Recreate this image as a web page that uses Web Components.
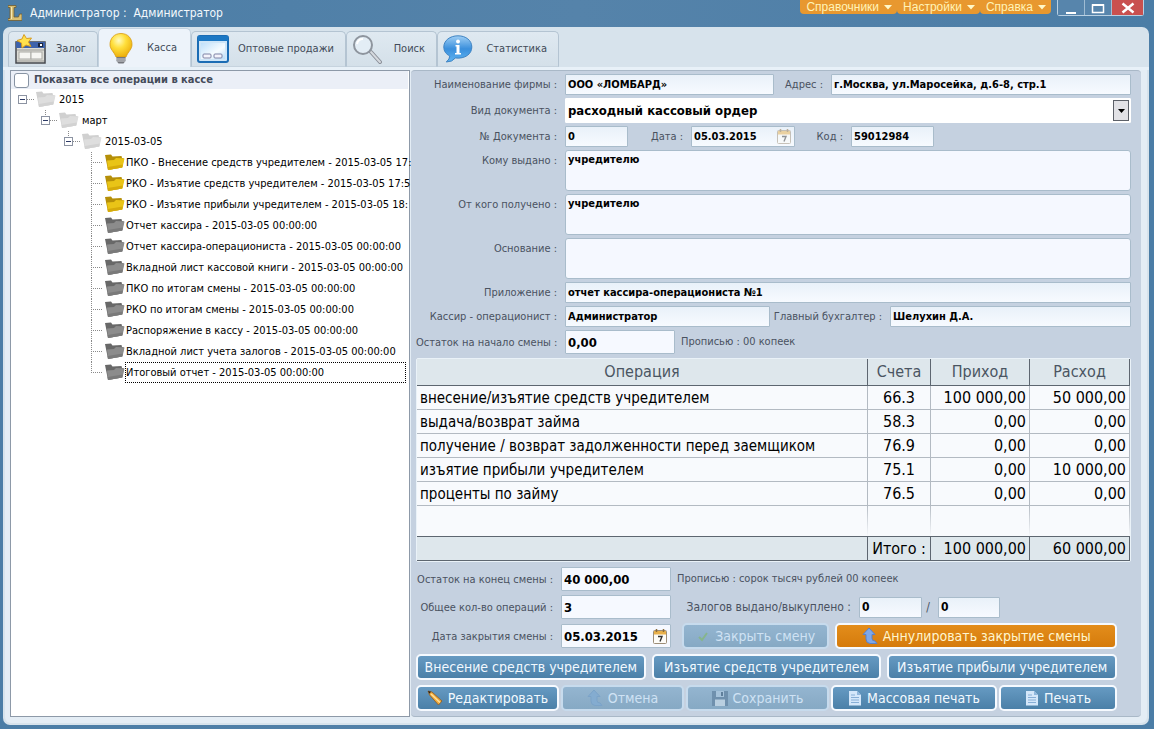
<!DOCTYPE html>
<html lang="ru">
<head>
<meta charset="utf-8">
<title>Администратор</title>
<style>
  html, body { margin: 0; background: #4f7fa8; }
  body { font: 11px/14px "DejaVu Sans Condensed", "DejaVu Sans", "Noto Sans", sans-serif; color: #4a5260; }
</style>
</head>
<body>
<cash-app></cash-app>

<script>
const define = (name, html, setup) => {
  const tpl = document.createElement('template');
  tpl.innerHTML = html;
  customElements.define(name, class extends HTMLElement {
    connectedCallback() {
      if (this.shadowRoot) return;
      const root = this.attachShadow({ mode: 'open' });
      root.append(tpl.content.cloneNode(true));
      if (setup) setup(this, root);
    }
  });
};

/* ---------- icons ---------- */
const folder = (a, b, c) => `<svg viewBox="0 0 20 17" width="20" height="17">
  <path d="M0 1l6-.5 1.500 2 9-.5.5 2 2 .5-2 9L3 16z" fill="${a}"/>
  <path d="M2 6.500l7-.5 2-2 8.500.5-2 9L3 16z" fill="${b}"/>
  <path d="M2.600 13l15.200-2.500-.6 3L3 16z" fill="${c}"/></svg>`;
const calendar = `<svg viewBox="0 0 14 16" width="14" height="16">
  <rect x="0.500" y="2.500" width="13" height="13" rx="1" fill="#fdfcf8" stroke="#9c8d77"/>
  <path d="M1 3h12v3.500H1z" fill="#e8b04a"/>
  <path d="M3.500 1v3M10.500 1v3" stroke="#8a6b3a" stroke-width="1.500"/>
  <path d="M5 8.500h4l-2 5" fill="none" stroke="#333" stroke-width="1.400"/></svg>`;
const page = `<svg viewBox="0 0 14 16" width="14" height="16">
  <path d="M1 1h8l4 4v10.500H1z" fill="#d4e7fa"/><path d="M9 1l4 4H9z" fill="#8fb7dd"/>
  <path d="M3 5h4M3 7.500h8M3 10h8M3 12.500h8" stroke="#86aed6"/></svg>`;
const arrow = (a, b) => `<svg viewBox="0 0 16 16" width="16" height="16">
  <path d="M7 0L1 6.500h3V11q0 4 4 4.500h7l-2-2.500q-3 0-3-2.500v-4h3z" fill="${a}" stroke="${b}"/></svg>`;
const ICONS = {
  logo: `<svg viewBox="0 0 14 16" width="14" height="16">
    <path d="M0 .5h8v2H6V12h4.500l1-3H14v6.500H0v-2h2V2.500H0z" fill="#d9bf72" stroke="#6d5c33" stroke-width=".8"/>
    <path d="M3.500 2v12" stroke="#f6e8b4"/></svg>`,
  pledge: `<svg viewBox="0 0 33 30" width="33" height="30">
    <rect x="2" y="8" width="29" height="21" fill="#dcdcd6" stroke="#45484e" stroke-width="1.500"/>
    <path d="M2 8h29v6H2z" fill="#3d62ab"/><path d="M24 9h5v4h-5z" fill="#1b2741"/><path d="M26 10h2v2h-2z" fill="#fff"/>
    <path d="M3 16h27M3 27h27" stroke="#9a9a96"/>
    <rect x="5" y="18" width="12" height="7" fill="#f6f6f2" stroke="#a9a9a4"/>
    <rect x="17" y="18" width="11" height="7" fill="#f6f6f2" stroke="#a9a9a4"/>
    <path d="M10 .5l2.500 4 5-.5-3 4 2.500 4.500-5-1.500-4 3-.5-5L3 6.500l5-1.500z" fill="#ffe14d" stroke="#d79b21"/></svg>`,
  bulb: `<svg viewBox="0 0 24 31" width="24" height="31">
    <defs><radialGradient id="g" cx=".4" cy=".3" r=".8"><stop offset="0" stop-color="#fffbc0"/><stop offset=".4" stop-color="#ffdf3c"/><stop offset="1" stop-color="#e8a400"/></radialGradient></defs>
    <path d="M12 .5C5 .5 1 5.500 1 11.500c0 5 4 7 6 12.500h10c2-5.500 6-7.500 6-12.500C23 5.500 19 .5 12 .5z" fill="url(#g)" stroke="#d89b12" stroke-width=".8"/>
    <path d="M7.500 24h9v4l-2 2.500h-5l-2-2.500z" fill="#75777c"/><path d="M7.500 26h9M8 28h8" stroke="#cfd1d5"/></svg>`,
  sales: `<svg viewBox="0 0 32 28" width="32" height="28">
    <defs><linearGradient id="g" x2="1" y2="1"><stop offset="0" stop-color="#bfe0fb"/><stop offset=".6" stop-color="#f7fcff"/><stop offset="1" stop-color="#b9dcf7"/></linearGradient></defs>
    <rect x="1" y="1" width="30" height="26" rx="2" fill="#cfe6f8" stroke="#1b6cb4" stroke-width="2"/>
    <path d="M1 1h30v5H1z" fill="#1c78c4"/><rect x="4" y="8" width="24" height="16" fill="url(#g)"/>
    <rect x="6" y="19" width="8" height="4" rx="1" fill="#f4f3fb" stroke="#7c82a5"/>
    <rect x="17" y="19" width="8" height="4" rx="1" fill="#f4f3fb" stroke="#7c82a5"/></svg>`,
  search: `<svg viewBox="0 0 30 30" width="30" height="30">
    <path d="M19 18l9 10" stroke="#8b9099" stroke-width="4" stroke-linecap="round"/><path d="M19 18l9 10" stroke="#d5d9de" stroke-width="2" stroke-linecap="round"/>
    <circle cx="11" cy="11" r="9" fill="#e3edf5" stroke="#8e959e" stroke-width="2"/><path d="M5 10q1-5 6-5" stroke="#fff" stroke-width="2" fill="none"/></svg>`,
  info: `<svg viewBox="0 0 30 28" width="30" height="28">
    <defs><linearGradient id="g" x2="0" y2="1"><stop offset="0" stop-color="#9fcff5"/><stop offset=".5" stop-color="#3a8fdc"/><stop offset="1" stop-color="#5fb5f2"/></linearGradient></defs>
    <path d="M15 .8C7 .8.8 5.500.8 12c0 4 2 7 6 9q0 3-3.500 6 6 0 9-4c10 1 16.500-4 16.500-11C28.800 5.500 23 .8 15 .8z" fill="url(#g)" stroke="#3f83c2"/>
    <circle cx="15" cy="6.500" r="1.900" fill="#fff"/><path d="M12.500 10h4v8h1.500v1.500h-6V18h1.500v-6.500h-1z" fill="#fff"/></svg>`,
  folder0: folder('#d0d0d0', '#dedede', '#d2d2d2'),
  folder1: folder('#b58f08', '#e9c417', '#d6ab0a'),
  folder2: folder('#686868', '#8c8c8c', '#7a7a7a'),
  calendar,
  caret: `<svg viewBox="0 0 8 5" width="8" height="5"><path d="M0 0h8L4 4.500z" fill="#fff8c8"/></svg>`,
  down: `<svg viewBox="0 0 7 4" width="7" height="4"><path d="M0 0h7L3.500 4z" fill="#000"/></svg>`,
  min: `<svg viewBox="0 0 12 14" width="12" height="14"><path d="M1 12h10" stroke="#fff" stroke-width="2"/></svg>`,
  max: `<svg viewBox="0 0 14 12" width="14" height="12"><path d="M1.500 3h11v7.500h-11z" fill="none" stroke="#fff" stroke-width="1.500"/><path d="M1 2h12v2H1z" fill="#fff"/></svg>`,
  close: `<svg viewBox="0 0 14 12" width="14" height="12"><path d="M1.500 1.500l11 9M12.500 1.500l-11 9" stroke="#fff" stroke-width="2.500"/></svg>`,
  pencil: `<svg viewBox="0 0 16 16" width="16" height="16"><path d="M1 1l4 1 10 9-3.500 4L2.500 5z" fill="#eda93c" stroke="#8a5a26" stroke-width=".8"/><path d="M4 4l9 8.500" stroke="#ffe09a" stroke-width="1.500"/><path d="M1 1l3 .8-1.500 2z" fill="#222"/></svg>`,
  check: `<svg viewBox="0 0 14 12" width="14" height="12"><path d="M3 7l3 3 5-7" fill="none" stroke="#86b58c" stroke-width="2"/></svg>`,
  up: arrow('#7fa8e8', '#5b80c6'),
  upoff: arrow('#84acd0', '#7ba3c8'),
  disk: `<svg viewBox="0 0 16 16" width="16" height="16"><path d="M0 1h16v15H0z" fill="#6f90ad"/><path d="M4 1h8v6H4z" fill="#a5c2da"/><path d="M3 9.500h10V16H3z" fill="#b9cfe0"/><path d="M9 2h2v4H9z" fill="#5f7f9b"/></svg>`,
  page
};
define('ui-icon', `<style>:host{display:inline-flex;flex:none}svg{display:block}</style>`,
  (el, root) => root.querySelector('style').insertAdjacentHTML('afterend', ICONS[el.getAttribute('name')] || ''));

/* ---------- buttons ---------- */
define('action-button', `<style>
  :host { display: block; min-width: 0; --top: #669ac2; --low: #4b80a8; }
  :host([tone=orange]) { --top: #e38d1b; --low: #d57b0c; }
  button { box-sizing: border-box; width: 100%; height: 26px; margin: 0; padding: 0; display: flex; align-items: center; justify-content: center; gap: 5px;
    border: 2px solid #f6faff; border-radius: 5px; background: linear-gradient(var(--top), var(--low)); color: #f2f9ff;
    font: inherit; font-size: 14px; line-height: 20px; white-space: nowrap; }
  :host([tone=orange]) button { color: #fff6cf; }
  button:disabled { background: linear-gradient(#94b5d0, #86a9c4); border-color: #c7dbed; color: #cfe2f4; }
</style><button type="button"><span><slot></slot></span></button>`, (el, root) => {
  const button = root.querySelector('button');
  if (el.hasAttribute('icon')) button.insertAdjacentHTML('afterbegin', `<ui-icon name="${el.getAttribute('icon')}"></ui-icon>`);
  button.disabled = el.hasAttribute('disabled');
});

/* ---------- form fields ---------- */
define('form-field', `<style>
  :host { display: flex; align-items: stretch; min-width: 0; }
  label { flex: none; box-sizing: border-box; width: var(--label, 149px); padding-right: 8px; text-align: right; white-space: nowrap; line-height: 21px; align-self: center; }
  :host([type=area]) label { align-self: flex-start; }
  .box { position: relative; display: flex; flex: 1; min-width: 0; }
  input, textarea, select { box-sizing: border-box; width: 100%; min-width: 0; margin: 0; padding: 0 2px; border: 1px solid #a9bccb; border-radius: 1px;
    background: linear-gradient(#e9f1f9, #f7faff); color: #000; font: inherit; font-weight: bold; outline: 0; }
  input { height: 21px; }
  :host([big]) input { height: 24px; font-size: 13px; background: #f6f9ff; }
  textarea { height: 41px; padding: 2px; border-radius: 3px; resize: none; background: #f5f8ff; display: block; }
  select { height: 25px; appearance: none; border-color: #fff; background: #fff; font-size: 13px; }
  .arrow { position: absolute; right: 2px; top: 2px; bottom: 2px; width: 16px; box-sizing: border-box; border: 1px solid #5c6068; background: #e2e2e6; display: flex; align-items: center; justify-content: center; pointer-events: none; }
  .cal { position: absolute; right: 4px; top: 2px; padding: 0; border: 0; background: none; display: flex; }
  :host([big]) .cal { top: 4px; }
  :host([muted]) .cal { opacity: .5; }
</style><label for="f"></label><span class="box"></span>`, (el, root) => {
  const label = root.querySelector('label'), box = root.querySelector('.box');
  const value = el.getAttribute('value') || '', type = el.getAttribute('type');
  label.textContent = el.getAttribute('label');
  if (type === 'area') box.innerHTML = `<textarea id="f">${value}</textarea>`;
  else if (type === 'select') box.innerHTML = `<select id="f"><option>${value}</option></select><span class="arrow"><ui-icon name="down"></ui-icon></span>`;
  else box.innerHTML = `<input id="f" value="${value}">` + (type === 'date' ? `<button class="cal" type="button" aria-label="Календарь"><ui-icon name="calendar"></ui-icon></button>` : '');
});

/* ---------- tree ---------- */
define('tree-item', `<style>
  :host { display: block; }
  .row { display: flex; align-items: center; height: 21px; color: #000; }
  .toggle { padding: 0; border: 0; background: none; display: flex; flex: none; }
  .branch, .ic { flex: none; display: flex; }
  svg { display: block; }
  .text { flex: 1; min-width: 0; white-space: nowrap; line-height: 19px; padding: 1px; }
  :host([kind="0"]) .text { padding-left: 3px; }
  :host([selected]) .text { border: 1px dotted #000; padding: 0; }
  .kids { padding-left: 23px; }
</style><div class="row"><span class="branch"></span><span class="ic"></span><span class="text"></span></div><div class="kids"><slot></slot></div>`, (el, root) => {
  const dot = 'stroke="#8a8a8a" stroke-dasharray="1 1"';
  const kids = el.children.length, top = el.hasAttribute('root'), last = !el.nextElementSibling;
  const art = kids
    ? `${top ? '' : `<path d="M8.500 0v6" ${dot}/>`}<path d="M13 10.500h8" ${dot}/><rect x="4.500" y="6.500" width="8" height="8" fill="#fff" stroke="#8c93a2"/><path d="M6 10.500h5" stroke="#2d3a66"/>`
    : `<path d="M8.500 0v${last ? 11 : 21}M8 10.500h12" ${dot}/>`;
  const svg = `<svg width="22" height="21" viewBox="0 0 22 21" shape-rendering="crispEdges" fill="none">${art}</svg>`;
  root.querySelector('.branch').innerHTML = kids ? `<button class="toggle" type="button" aria-label="Свернуть">${svg}</button>` : svg;
  root.querySelector('.ic').innerHTML = `<ui-icon name="folder${el.getAttribute('kind')}"></ui-icon>`;
  root.querySelector('.text').textContent = el.getAttribute('text');
});
const LEAVES = [
  [1, 'ПКО - Внесение средств учредителем - 2015-03-05 17:'], [1, 'РКО - Изъятие средств учредителем - 2015-03-05 17:5'],
  [1, 'РКО - Изъятие прибыли учредителем - 2015-03-05 18:'], [2, 'Отчет кассира - 2015-03-05 00:00:00'],
  [2, 'Отчет кассира-операциониста - 2015-03-05 00:00:00'], [2, 'Вкладной лист кассовой книги - 2015-03-05 00:00:00'],
  [2, 'ПКО по итогам смены - 2015-03-05 00:00:00'], [2, 'РКО по итогам смены - 2015-03-05 00:00:00'],
  [2, 'Распоряжение в кассу - 2015-03-05 00:00:00'], [2, 'Вкладной лист учета залогов - 2015-03-05 00:00:00'],
  [2, 'Итоговый отчет - 2015-03-05 00:00:00']
];
define('operation-tree', `<style>
  :host { display: block; box-sizing: border-box; border: 1px solid #8d99a8; background: #fff; min-width: 0; }
  .head { display: flex; align-items: center; gap: 5px; height: 18px; margin-right: 1px; padding-left: 3px; background: #ebeff7; }
  input { appearance: none; flex: none; box-sizing: border-box; width: 15px; height: 15px; margin: 0; border: 1px solid #8793a3; border-radius: 3px; background: #fff; }
  label { font-weight: bold; white-space: nowrap; color: #434b5a; }
  .list { padding: 0 3px; }
</style><div class="head"><input type="checkbox" id="all"><label for="all">Показать все операции в кассе</label></div>
<div class="list"><tree-item root kind="0" text="2015"><tree-item kind="0" text="март"><tree-item kind="0" text="2015-03-05">${
  LEAVES.map(([k, t], i) => `<tree-item kind="${k}" text="${t}"${i === 10 ? ' selected' : ''}></tree-item>`).join('')
}</tree-item></tree-item></tree-item></div>`);

/* ---------- operations table ---------- */
const ROWS = [
  ['внесение/изъятие средств учредителем', '66.3', '100 000,00', '50 000,00'],
  ['выдача/возврат займа', '58.3', '0,00', '0,00'],
  ['получение / возврат задолженности перед заемщиком', '76.9', '0,00', '0,00'],
  ['изъятие прибыли учредителем', '75.1', '0,00', '10 000,00'],
  ['проценты по займу', '76.5', '0,00', '0,00']
];
define('operation-table', `<style>
  :host { display: block; border: 1px solid #eaf2f8; border-radius: 2px; background: #f8fafd; }
  table { width: 100%; table-layout: fixed; border-collapse: separate; border-spacing: 0; font-size: 16px; line-height: 20px; color: #000; }
  th, td { box-sizing: border-box; height: 24px; padding: 0 3px; white-space: nowrap; font-weight: normal; border: 0 solid #b3bac2; border-width: 0 1px 1px 0; text-align: right; }
  th { height: 27px; background: #dee7ec; color: #4a5562; text-align: center; border-color: #5d6670; }
  td:first-child { text-align: left; font-size: 15px; }
  td:nth-child(2) { text-align: center; }
  .blank td { height: 30px; border-right: 1px solid; border-image: linear-gradient(#b3bac2, #f8fafd) 1; border-bottom: 0; }
  tfoot td { height: 25px; background: #dee7ec; border-color: #5d6670; border-top-width: 1px; }
</style>
<table><colgroup><col><col style="width:63px"><col style="width:99px"><col style="width:100px"></colgroup>
<thead><tr><th>Операция</th><th>Счета</th><th>Приход</th><th>Расход</th></tr></thead>
<tbody>${ROWS.map(r => `<tr>${r.map(c => `<td>${c}</td>`).join('')}</tr>`).join('')}<tr class="blank"><td></td><td></td><td></td><td></td></tr></tbody>
<tfoot><tr><td></td><td>Итого :</td><td>100 000,00</td><td>60 000,00</td></tr></tfoot></table>`);

/* ---------- document form ---------- */
define('cash-document', `<style>
  :host { display: block; box-sizing: border-box; min-width: 0; padding: 3px 10px 3px 5px; border: 1px solid #a9b8c7; border-width: 1px 0; border-radius: 4px; background: #c5d1e0; }
  .fields, .totals { display: flex; flex-direction: column; gap: 3px; }
  .totals { gap: 4px; margin-right: 14px; --label: 145px; }
  .row { display: flex; align-items: center; }
  operation-table { margin: 4px 0 5px; }
  .grow { flex: 1; }
  .firm { width: 358px; } .addr { --label: 57px; }
  .num { width: 212px; } .date { width: 167px; --label: 63px; } .code { width: 139px; --label: 56px; }
  .cashier { width: 354px; } .chief { --label: 120px; }
  .start { width: 259px; } .end { width: 255px; }
  .note { padding-left: 6px; white-space: nowrap; }
  .issued { width: 251px; font-size: 12px; --label: 188px; } .redeemed { width: 78px; font-size: 12px; --label: 16px; }
  .actions { gap: 6px; height: 26px; margin-top: 1px; }
  .w1 { flex: 147; } .w2 { flex: 281; }
  .close { display: flex; gap: 6px; flex: 1; padding-left: 11px; }
  .three action-button { flex: 1; }
  .five { gap: 2px; }
</style>
<div class="fields">
  <div class="row"><form-field class="firm" label="Наименование фирмы :" value="ООО «ЛОМБАРД»"></form-field><form-field class="addr grow" label="Адрес :" value="г.Москва, ул.Маросейка, д.6-8, стр.1"></form-field></div>
  <form-field type="select" label="Вид документа :" value="расходный кассовый ордер"></form-field>
  <div class="row"><form-field class="num" label="№ Документа :" value="0"></form-field><form-field class="date" type="date" muted label="Дата :" value="05.03.2015"></form-field><form-field class="code" label="Код :" value="59012984"></form-field></div>
  <form-field type="area" label="Кому выдано :" value="учредителю"></form-field>
  <form-field type="area" label="От кого получено :" value="учредителю"></form-field>
  <form-field type="area" label="Основание :"></form-field>
  <form-field label="Приложение :" value="отчет кассира-операциониста №1"></form-field>
  <div class="row"><form-field class="cashier" label="Кассир - операционист :" value="Администратор"></form-field><form-field class="chief grow" label="Главный бухгалтер :" value="Шелухин Д.А."></form-field></div>
  <div class="row"><form-field class="start" big label="Остаток на начало смены :" value="0,00"></form-field><span class="note">Прописью : 00 копеек</span></div>
</div>
<operation-table></operation-table>
<div class="totals">
  <div class="row"><form-field class="end" big label="Остаток на конец смены :" value="40 000,00"></form-field><span class="note">Прописью : сорок тысяч рублей 00 копеек</span></div>
  <div class="row"><form-field class="end" big label="Общее кол-во операций :" value="3"></form-field><form-field class="issued" label="Залогов выдано/выкуплено :" value="0"></form-field><form-field class="redeemed" label="/" value="0"></form-field></div>
  <div class="row"><form-field class="end" big type="date" label="Дата закрытия смены :" value="05.03.2015"></form-field>
    <div class="close"><action-button class="w1" icon="check" disabled>Закрыть смену</action-button><action-button class="w2" icon="up" tone="orange">Аннулировать закрытие смены</action-button></div></div>
  <div class="row actions three"><action-button>Внесение средств учредителем</action-button><action-button>Изъятие средств учредителем</action-button><action-button>Изъятие прибыли учредителем</action-button></div>
  <div class="row actions five"><action-button style="flex:143" icon="pencil">Редактировать</action-button><action-button style="flex:123" icon="upoff" disabled>Отмена</action-button><action-button style="flex:143" icon="disk" disabled>Сохранить</action-button><action-button style="flex:166" icon="page">Массовая печать</action-button><action-button style="flex:118" icon="page">Печать</action-button></div>
</div>`);

/* ---------- window chrome ---------- */
define('title-bar', `<style>
  :host { display: flex; align-items: flex-start; height: 27px; padding-right: 5px; color: #f3f8fc; }
  .name { display: flex; align-items: center; gap: 8px; flex: 1; height: 26px; padding-left: 5px; font-size: 12px; white-space: pre; }
  nav { display: flex; margin-right: 6px; }
  nav button { height: 14px; padding: 0 5px 0 6px; border: 0; border-radius: 0 0 4px 4px; background: #e8982f; color: #fff3b8; font: 12px/13px "Liberation Sans", sans-serif; display: flex; align-items: center; gap: 5px; }
  .ctl { display: flex; border: 1px solid #b9d0e2; border-top: 0; border-radius: 0 0 3px 3px; }
  .ctl button { box-sizing: border-box; width: 27px; height: 15px; padding: 0; border: 0; border-right: 1px solid #9fbcd3; background: #5785ac; display: flex; align-items: center; justify-content: center; }
  .ctl .x { width: 31px; border: 0; background: #c9504f; }
</style>
<div class="name"><ui-icon name="logo"></ui-icon><span>Администратор :  Администратор</span></div>
<nav><button type="button">Справочники<ui-icon name="caret"></ui-icon></button><button type="button">Настройки<ui-icon name="caret"></ui-icon></button><button type="button">Справка<ui-icon name="caret"></ui-icon></button></nav>
<div class="ctl"><button type="button" aria-label="Свернуть"><ui-icon name="min"></ui-icon></button><button type="button" aria-label="Развернуть"><ui-icon name="max"></ui-icon></button><button class="x" type="button" aria-label="Закрыть"><ui-icon name="close"></ui-icon></button></div>`);

define('tab-strip', `<style>
  :host { display: flex; align-items: flex-end; height: 40px; padding-left: 5px; border-bottom: 3px solid #e8f1f8; }
  button { box-sizing: border-box; height: 36px; margin: 0; padding: 0 11px 0 5px; display: flex; align-items: center; justify-content: space-between; border: 1px solid #b4c4d2; border-bottom-color: #c6d3de; border-radius: 5px 5px 0 0; background: linear-gradient(#dfe9f1, #d4e0e9); color: #424b59; font: inherit; white-space: nowrap; }
  button[aria-selected=true] { height: 39px; padding: 0 13px 0 10px; background: #edf3fa; border-color: #c3d2df; border-bottom: 0; }
</style>
<button role="tab" style="width:90px"><ui-icon name="pledge"></ui-icon>Залог</button>
<button role="tab" style="width:93px" aria-selected="true"><ui-icon name="bulb"></ui-icon>Касса</button>
<button role="tab" style="width:155px"><ui-icon name="sales"></ui-icon>Оптовые продажи</button>
<button role="tab" style="width:91px"><ui-icon name="search"></ui-icon>Поиск</button>
<button role="tab" style="width:122px"><ui-icon name="info"></ui-icon>Статистика</button>`);

define('cash-app', `<style>
  :host { display: flex; flex-direction: column; box-sizing: border-box; min-height: 100vh; padding: 0 5px 4px 3px; background: linear-gradient(90deg, #4b7da6, #5583aa 50%, #4b7da6); }
  main { flex: 1; display: flex; flex-direction: column; border-radius: 7px; background: #d7e3ec; overflow: hidden; }
  .work { flex: 1; display: grid; grid-template-columns: 400px minmax(0, 1fr); gap: 1px; padding: 0 6px 6px 5px; margin: 0 2px 2px; background: #e4edf5; border-radius: 0 0 6px 6px; }
</style>
<title-bar></title-bar>
<main><tab-strip></tab-strip><div class="work"><operation-tree></operation-tree><cash-document></cash-document></div></main>`);
</script>
</body>
</html>
